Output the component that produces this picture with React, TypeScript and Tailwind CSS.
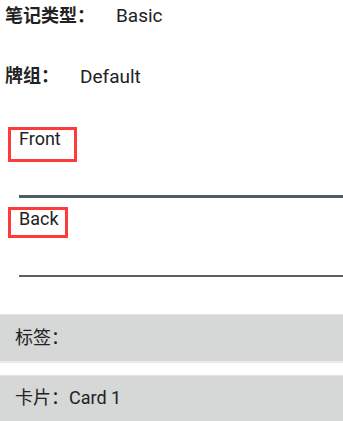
import React from "react";

const font = { fontFamily: '"Roboto", "Noto Sans CJK SC", sans-serif' };

export default function App() {
  return (
    <div
      className="w-[343px] h-[421px] bg-white overflow-hidden flex flex-col text-[#222222]"
      style={font}
    >
      <div className="h-[32px] flex items-center pl-[5px] text-[18px] leading-none">
        <span className="w-[111px] font-bold">笔记类型：</span>
        <span className="text-[19px]">Basic</span>
      </div>
      <div className="mt-[30px] h-[30px] flex items-center pl-[5px] text-[18px] leading-none">
        <span className="w-[75px] font-bold">牌组：</span>
        <span className="text-[19px]">Default</span>
      </div>

      <div className="mt-[36px] ml-[8px] w-[69px] h-[35px] border-[3px] border-[#ff3a3a] pl-[8px] text-[18px] leading-[18px]">
        Front
      </div>
      <div className="mt-[33px] ml-[19px] h-[3px] bg-[#4d5e66]" />

      <div className="mt-[9px] ml-[8px] w-[60px] h-[32px] border-[3px] border-[#ff3a3a] pl-[8px] text-[18px] leading-[18px]">
        Back
      </div>
      <div className="mt-[37px] ml-[19px] h-[2px] bg-[#5f5f5f]" />

      <div className="mt-[37px] h-[47px] bg-[#d6d7d7] border-t border-[#e3e3e3] shadow-[0_2px_1px_rgba(0,0,0,0.08)] flex items-center pl-[15px] text-[18px] leading-none">
        标签：
      </div>
      <div className="mt-[14px] h-[47px] bg-[#d6d7d7] border-t border-[#e3e3e3] flex items-center pl-[15px] text-[18px] leading-none">
        卡片：Card 1
      </div>
    </div>
  );
}
